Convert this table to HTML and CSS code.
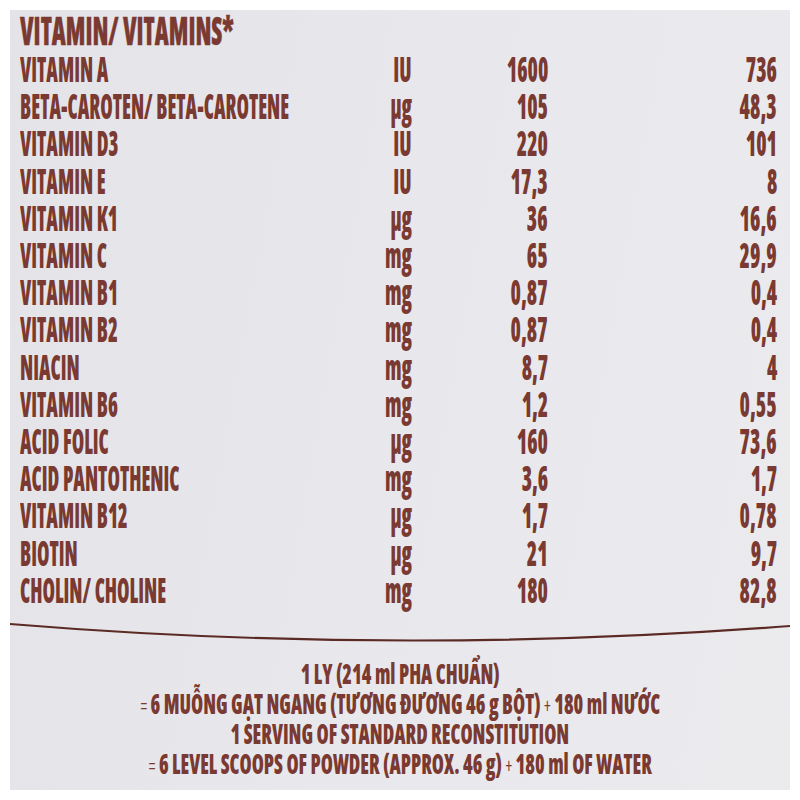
FILE: index.html
```html
<!DOCTYPE html>
<html lang="vi">
<head>
<meta charset="utf-8">
<title>Vitamin</title>
<link rel="stylesheet" href="styles.css">
</head>
<body>
<div class="label">
  <div class="title"><span class="sq">VITAMIN/ VITAMINS*</span></div>
  <div class="table">
    <div class="row"><div class="name"><span class="sq">VITAMIN A</span></div><div class="unit"><span class="sq">IU</span></div><div class="val"><span class="sq">1600</span></div><div class="pct"><span class="sq">736</span></div></div>
    <div class="row"><div class="name"><span class="sq">BETA-CAROTEN/ BETA-CAROTENE</span></div><div class="unit"><span class="sq">µg</span></div><div class="val"><span class="sq">105</span></div><div class="pct"><span class="sq">48,3</span></div></div>
    <div class="row"><div class="name"><span class="sq">VITAMIN D3</span></div><div class="unit"><span class="sq">IU</span></div><div class="val"><span class="sq">220</span></div><div class="pct"><span class="sq">101</span></div></div>
    <div class="row"><div class="name"><span class="sq">VITAMIN E</span></div><div class="unit"><span class="sq">IU</span></div><div class="val"><span class="sq">17,3</span></div><div class="pct"><span class="sq">8</span></div></div>
    <div class="row"><div class="name"><span class="sq">VITAMIN K1</span></div><div class="unit"><span class="sq">µg</span></div><div class="val"><span class="sq">36</span></div><div class="pct"><span class="sq">16,6</span></div></div>
    <div class="row"><div class="name"><span class="sq">VITAMIN C</span></div><div class="unit"><span class="sq">mg</span></div><div class="val"><span class="sq">65</span></div><div class="pct"><span class="sq">29,9</span></div></div>
    <div class="row"><div class="name"><span class="sq">VITAMIN B1</span></div><div class="unit"><span class="sq">mg</span></div><div class="val"><span class="sq">0,87</span></div><div class="pct"><span class="sq">0,4</span></div></div>
    <div class="row"><div class="name"><span class="sq">VITAMIN B2</span></div><div class="unit"><span class="sq">mg</span></div><div class="val"><span class="sq">0,87</span></div><div class="pct"><span class="sq">0,4</span></div></div>
    <div class="row"><div class="name"><span class="sq">NIACIN</span></div><div class="unit"><span class="sq">mg</span></div><div class="val"><span class="sq">8,7</span></div><div class="pct"><span class="sq">4</span></div></div>
    <div class="row"><div class="name"><span class="sq">VITAMIN B6</span></div><div class="unit"><span class="sq">mg</span></div><div class="val"><span class="sq">1,2</span></div><div class="pct"><span class="sq">0,55</span></div></div>
    <div class="row"><div class="name"><span class="sq">ACID FOLIC</span></div><div class="unit"><span class="sq">µg</span></div><div class="val"><span class="sq">160</span></div><div class="pct"><span class="sq">73,6</span></div></div>
    <div class="row"><div class="name"><span class="sq">ACID PANTOTHENIC</span></div><div class="unit"><span class="sq">mg</span></div><div class="val"><span class="sq">3,6</span></div><div class="pct"><span class="sq">1,7</span></div></div>
    <div class="row"><div class="name"><span class="sq">VITAMIN B12</span></div><div class="unit"><span class="sq">µg</span></div><div class="val"><span class="sq">1,7</span></div><div class="pct"><span class="sq">0,78</span></div></div>
    <div class="row"><div class="name"><span class="sq">BIOTIN</span></div><div class="unit"><span class="sq">µg</span></div><div class="val"><span class="sq">21</span></div><div class="pct"><span class="sq">9,7</span></div></div>
    <div class="row"><div class="name"><span class="sq">CHOLIN/ CHOLINE</span></div><div class="unit"><span class="sq">mg</span></div><div class="val"><span class="sq">180</span></div><div class="pct"><span class="sq">82,8</span></div></div>
  </div>
  <svg class="divider" viewBox="0 0 780 40" width="780" height="40" aria-hidden="true">
    <path d="M0 16 Q390 48 780 18" fill="none" stroke="#5c2a24" stroke-width="2.2"/>
  </svg>
  <div class="serving">
    <div class="line"><span class="sq">1 LY (214 ml PHA CHUẨN)</span></div>
    <div class="line"><span class="sq"><span class="op">=</span> 6 MUỖNG GẠT NGANG (TƯƠNG ĐƯƠNG 46 g BỘT) <span class="op">+</span> 180 ml NƯỚC</span></div>
    <div class="line"><span class="sq">1 SERVING OF STANDARD RECONSTITUTION</span></div>
    <div class="line"><span class="sq"><span class="op">=</span> 6 LEVEL SCOOPS OF POWDER (APPROX. 46 g) <span class="op">+</span> 180 ml OF WATER</span></div>
  </div>
</div>
</body>
</html>
```
FILE: styles.css
```css
html, body {
  margin: 0;
  padding: 0;
  background: #ffffff;
}

body {
  width: 800px;
  height: 800px;
  overflow: hidden;
}

.label {
  margin: 10px;
  width: 780px;
  height: 780px;
  box-sizing: border-box;
  background: linear-gradient(100deg, #e4e3e8 0%, #e8e7ec 45%, #ebebee 100%);
  font-family: "Open Sans", "DejaVu Sans Condensed", sans-serif;
  font-stretch: 75%;
  font-weight: 800;
  color: #7a3a31;
}

.sq {
  display: inline-block;
  white-space: nowrap;
  line-height: 1;
  vertical-align: middle;
  transform: scaleX(0.575);
  transform-origin: left center;
}

.title {
  display: flex;
  align-items: center;
  height: 40px;
  font-size: 38px;
  padding-left: 10px;
}

.title .sq {
  transform: scaleX(0.64);
  -webkit-text-stroke: 0.4px #7a3a31;
}

.table {
  padding: 0 13px 0 10px;
}

.row {
  display: grid;
  grid-template-columns: minmax(0, 1fr) 72px 136px 229px;
  align-items: center;
  height: 37.2px;
  font-size: 35px;
}

.name {
  white-space: nowrap;
  display: flex;
  align-items: center;
}

.unit,
.val,
.pct {
  display: flex;
  align-items: center;
  justify-content: flex-end;
}

.unit .sq,
.val .sq,
.pct .sq {
  transform: scaleX(0.6);
  transform-origin: right center;
}

.divider {
  display: block;
  width: 780px;
  height: 40px;
}

.serving {
  padding-top: 10px;
  font-size: 28px;
}

.line {
  display: flex;
  justify-content: center;
  align-items: center;
  height: 30px;
}

.line .sq {
  flex: none;
  transform: scaleX(0.7);
  transform-origin: center center;
}

.op {
  font-weight: 400;
  font-size: 0.8em;
}
```
